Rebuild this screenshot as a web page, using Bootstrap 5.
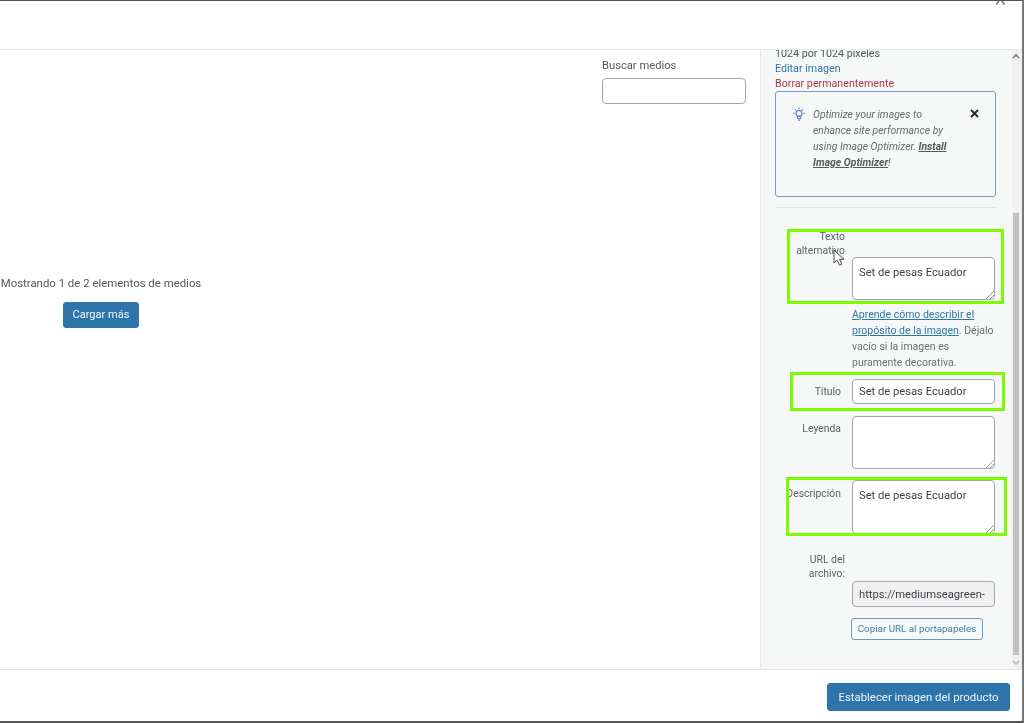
<!doctype html>
<html lang="es">
<head>
<meta charset="utf-8">
<title>Biblioteca de medios</title>
<link href="https://cdn.jsdelivr.net/npm/bootstrap@5.3.0/dist/css/bootstrap.min.css" rel="stylesheet">
<style>
html,body{height:723px;overflow:hidden;background:#fff}
body{font-family:Roboto,"Open Sans",sans-serif;font-size:11.2px;color:#50575e;line-height:16px}
.shell{height:723px;border-top:1px solid #555;border-bottom:2px solid #555;border-right:2px solid #777;filter:blur(.4px)}
.topbar{height:49px;border-bottom:1px solid #e6e8e8;background:#fff;flex:none}
.closex{position:absolute;left:996px;top:0}
.midrow{height:619px;min-height:0}
.browse{flex:1 1 auto;min-width:0}
.searchcol{width:144px;margin:7px 0 0 602px}
.searchcol label{display:block;font-size:11.2px;line-height:18px;margin-bottom:3px}
.fld{display:block;width:100%;border:1px solid #a3a7aa;border-radius:4px;background:#fff;font-size:11.2px;color:#3c434a;padding:5px 6px;line-height:16px}
.ta{resize:none;display:block;width:100%;padding-top:7px}
.countcol{width:202px;margin-top:170px;text-align:center;font-size:11.4px;line-height:18px;white-space:nowrap}
.loadbtn{background:#2c74a9;color:#f2f7fa;border:1px solid #2c74a9;border-radius:3px;font-size:11.1px;line-height:16px;padding:4px 0;margin-top:10px;height:26px;width:76px}
.loadbtn:hover{background:#2c74a9;color:#f2f7fa}
.sidecol{flex:0 0 262px;width:262px;background:#f6f7f7;border-left:1px solid #e6e8e8;overflow:hidden;position:relative}
.sidein{padding-left:14px;width:235px;margin-top:-4px;font-size:10.7px}
.sidein .meta{line-height:15px}
.linkb{color:#2e7aa6}
.linkr{color:#b3384a}
.notice{height:106px;width:221px;border:1px solid #7f98c4;border-radius:3px;padding:15px 30px 0 16px;background:#f6f7f7;position:relative;font-style:italic;font-size:10.4px;color:#646a70;gap:7px;line-height:16px;white-space:nowrap}
.notice a{color:#55595e;font-weight:700;text-decoration:underline}
.bulb{flex:none;margin-top:0}
.xmark{position:absolute;right:16px;top:17px}
.sep{width:221px;border-top:1px solid #e2e4e5;margin:10px 0 0}
.flab{width:70px;flex:none;text-align:right;font-size:10.4px;line-height:14px;color:#5b6167}
.flab-inset{padding-right:4px}
.fbox{width:143px;flex:none;margin-left:7px}
.hlp{font-size:10.5px;line-height:16px;margin-top:7px;color:#6a7076;white-space:nowrap}
.hlp a{color:#2e7aa6;text-decoration:underline}
.copybtn{border:1px solid #6c9dba;background:#f6f7f7;color:#3f82a8;border-radius:3px;font-size:9.8px;line-height:14px;padding:3px 0;height:22px;width:132px;margin-top:11px;margin-left:-1px;white-space:nowrap;display:block}
.grip{position:absolute;right:1px;bottom:1px}
.mark-box{position:absolute;border:3px solid #7cfc00;pointer-events:none}
.sbar{position:absolute;left:251px;top:0;bottom:0;width:10px;background:#f1f1f1}
.sthumb{position:absolute;left:1px;right:3px;top:163px;height:442px;background:#c1c1c1}
.sarrow{position:absolute;left:0;width:8px;height:6px}
.cursor{position:absolute;left:72px;top:199px}
.footbar{height:52px;flex:none;border-top:1px solid #e2e4e5;background:#fff;padding:13px 12px 0 0}
.savebtn{background:#2c74a9;color:#eef5f9;border:1px solid #2c74a9;border-radius:3px;font-size:11.4px;line-height:16px;padding:5px 0;width:183px;height:28px}
.savebtn:hover{background:#2c74a9;color:#eef5f9}
</style>
</head>
<body>
<div class="shell d-flex flex-column position-relative">
  <div class="topbar position-relative"><svg class="closex" width="9" height="4" viewBox="0 0 9 4" fill="none" stroke="#777" stroke-width="1.6"><path d="M3 0L.5 3.5M6 0l2.5 3.5"/></svg></div>
  <div class="midrow d-flex">
    <div class="browse">
      <div class="searchcol">
        <label for="q">Buscar medios</label>
        <input id="q" class="fld" type="text" style="height:26px">
      </div>
      <div class="countcol">
        <div>Mostrando 1 de 2 elementos de medios</div>
        <button class="btn loadbtn" type="button">Cargar más</button>
      </div>
    </div>
    <aside class="sidecol">
      <div class="sidein">
        <div class="meta">1024 por 1024 píxeles</div>
        <div class="meta"><a class="linkb text-decoration-none" href="#">Editar imagen</a></div>
        <div class="meta"><a class="linkr text-decoration-none" href="#">Borrar permanentemente</a></div>
        <div class="notice d-flex">
          <svg class="bulb" width="14" height="15" viewBox="0 0 14 15" fill="none" stroke="#5b80c8" stroke-width="1.1"><circle cx="7" cy="6.4" r="3"/><path d="M5.6 9.4h2.8v2.4H5.6zM6 13.3h2M7 .5v1.4M1.2 6.4h1.3M11.5 6.4h1.3M2.9 2.3l1 1M11.1 2.3l-1 1"/></svg>
          <div>Optimize your images to<br>enhance site performance by<br>using Image Optimizer. <a href="#">Install<br>Image Optimizer</a>!</div>
          <svg class="xmark" width="9" height="9" viewBox="0 0 9 9" stroke="#2b2b2b" stroke-width="2"><path d="M1 1l7 7M8 1L1 8"/></svg>
        </div>
        <div class="sep"></div>
        <div class="frow d-flex" style="margin-top:22px">
          <div class="flab">Texto<br>alternativo</div>
          <div class="fbox" style="padding-top:27px"><div class="position-relative"><textarea class="fld ta" style="height:43px">Set de pesas Ecuador</textarea><svg class="grip" width="8" height="8" viewBox="0 0 8 8" stroke="#999"><path d="M0 8l8-8M4 8l4-4"/></svg></div>
            <div class="hlp"><a href="#">Aprende cómo describir el<br>propósito de la imagen</a>. Déjalo<br>vacío si la imagen es<br>puramente decorativa.</div>
          </div>
        </div>
        <div class="frow d-flex" style="margin-top:8px">
          <div class="flab flab-inset" style="padding-top:6px">Título</div>
          <div class="fbox"><input class="fld" style="height:25px" value="Set de pesas Ecuador"></div>
        </div>
        <div class="frow d-flex" style="margin-top:12px">
          <div class="flab flab-inset" style="padding-top:6px">Leyenda</div>
          <div class="fbox"><div class="position-relative"><textarea class="fld ta" style="height:53px"></textarea><svg class="grip" width="8" height="8" viewBox="0 0 8 8" stroke="#999"><path d="M0 8l8-8M4 8l4-4"/></svg></div></div>
        </div>
        <div class="frow d-flex" style="margin-top:11px">
          <div class="flab flab-inset" style="padding-top:7px">Descripción</div>
          <div class="fbox"><div class="position-relative"><textarea class="fld ta" style="height:54px">Set de pesas Ecuador</textarea><svg class="grip" width="8" height="8" viewBox="0 0 8 8" stroke="#999"><path d="M0 8l8-8M4 8l4-4"/></svg></div></div>
        </div>
        <div class="frow d-flex" style="margin-top:19px">
          <div class="flab">URL del<br>archivo:</div>
          <div class="fbox" style="padding-top:28px">
            <input class="fld" style="height:26px;background:#f0f0f1" readonly value="https://mediumseagreen-">
            <button class="copybtn" type="button">Copiar URL al portapapeles</button>
          </div>
        </div>
      </div>
      <div class="sbar">
        <svg class="sarrow" style="top:3px" viewBox="0 0 8 6" fill="none" stroke="#777" stroke-width="1.6"><path d="M1 5l3-3 3 3"/></svg>
        <div class="sthumb"></div>
        <svg class="sarrow" style="bottom:3px" viewBox="0 0 8 6" fill="none" stroke="#bbb" stroke-width="1.6"><path d="M1 1l3 3 3-3"/></svg>
      </div>
      <div class="mark-box" style="left:26px;top:179px;width:217px;height:75px"></div>
      <div class="mark-box" style="left:29px;top:322px;width:215px;height:39px"></div>
      <div class="mark-box" style="left:25px;top:427px;width:221px;height:59px"></div>
      <svg class="cursor" width="13" height="18" viewBox="0 0 13 18"><path d="M1 1v13l3.2-2.8 2.2 5 2.4-1-2.2-4.9h4.4z" fill="#fff" stroke="#444"/></svg>
    </aside>
  </div>
  <div class="footbar d-flex justify-content-end">
    <button class="btn savebtn" type="button">Establecer imagen del producto</button>
  </div>
</div>
</body>
</html>
